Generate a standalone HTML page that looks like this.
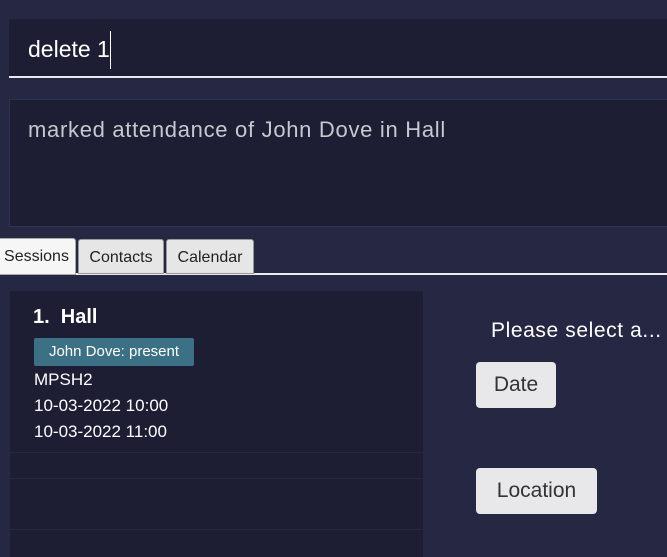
<!DOCTYPE html>
<html><head><style>
body{margin:0;width:667px;height:557px;background:#252743;font-family:"Liberation Sans",sans-serif;position:relative;overflow:hidden}
.a{position:absolute}
</style></head><body>
<div class="a" style="left:9px;top:19px;width:658px;height:57px;background:#1d1d34;border-bottom:2px solid #e8e8ee"></div>
<div class="a" style="left:28px;top:36px;font-size:23px;color:#fff;font-weight:300">delete 1</div>
<div class="a" style="left:110px;top:31px;width:1px;height:38px;background:#fff"></div>
<div class="a" style="left:9px;top:99px;width:658px;height:126px;background:#1d1d34;border:1px solid #2f3150"></div>
<div class="a" style="left:28px;top:117px;font-size:22px;letter-spacing:0.7px;color:#c8c8d0">marked attendance of John Dove in Hall</div>
<div class="a" style="left:0;top:273px;width:667px;height:2px;background:#e8e8ee"></div>
<div class="a" style="left:-3px;top:238px;width:77px;height:35px;background:#f6f6f6;border:1px solid #aaa;border-radius:3px 3px 0 0;font-size:16px;color:#222;line-height:36px;text-align:center">Sessions</div>
<div class="a" style="left:78px;top:239px;width:84px;height:33px;background:#e6e6e6;border:1px solid #999;border-radius:3px 3px 0 0;font-size:16px;color:#222;line-height:35px;text-align:center">Contacts</div>
<div class="a" style="left:166px;top:239px;width:86px;height:33px;background:#e6e6e6;border:1px solid #999;border-radius:3px 3px 0 0;font-size:16px;color:#222;line-height:35px;text-align:center">Calendar</div>
<div class="a" style="left:10px;top:291px;width:413px;height:266px;background:#1d1d34"></div>
<div class="a" style="left:10px;top:452px;width:413px;height:1px;background:#262842"></div>
<div class="a" style="left:10px;top:478px;width:413px;height:1px;background:#262842"></div>
<div class="a" style="left:10px;top:529px;width:413px;height:1px;background:#262842"></div>
<div class="a" style="left:33px;top:306px;font-size:20px;font-weight:bold;color:#fff">1.&nbsp; Hall</div>
<div class="a" style="left:34px;top:338px;width:160px;height:28px;background:#3b7085;border-radius:2px;font-size:15px;color:#fff;line-height:28px;text-align:center">John Dove: present</div>
<div class="a" style="left:34px;top:367px;font-size:17px;color:#fff;line-height:26px">MPSH2<br>10-03-2022 10:00<br>10-03-2022 11:00</div>
<div class="a" style="left:491px;top:319px;font-size:21px;letter-spacing:0.6px;color:#fff">Please select a...</div>
<div class="a" style="left:476px;top:362px;width:80px;height:46px;background:#e8e8ea;border-radius:4px;font-size:21px;color:#333;line-height:46px;text-align:center">Date</div>
<div class="a" style="left:476px;top:468px;width:121px;height:46px;background:#e8e8ea;border-radius:4px;font-size:21px;color:#333;line-height:46px;text-align:center">Location</div>
</body></html>
